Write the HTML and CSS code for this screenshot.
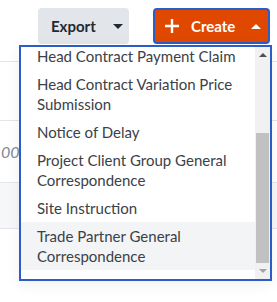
FILE: index.html
```html
<!DOCTYPE html>
<html lang="en">
<head>
    <meta charset="UTF-8">
    <meta name="viewport" content="width=device-width, initial-scale=1.0">
    <title>Create menu</title>
    <link rel="stylesheet" href="styles.css">
</head>
<body>
    <div class="toolbar">
        <button class="btn btn-export">Export <span class="caret-down"></span></button>
        <button class="btn btn-create">
            <svg class="plus" width="14" height="14" viewBox="0 0 14 14"><path d="M7 0v14M0 7h14" stroke="#fff" stroke-width="2.4"/></svg>
            Create <span class="caret-up"></span>
        </button>
    </div>

    <div class="table">
        <div class="row row-a"></div>
        <div class="row row-b"><span class="amount">00</span></div>
        <div class="row row-c"></div>
    </div>

    <div class="menu">
        <ul class="menu-list">
            <li>Head Contract Payment Claim</li>
            <li>Head Contract Variation Price Submission</li>
            <li>Notice of Delay</li>
            <li>Project Client Group General Correspondence</li>
            <li>Site Instruction</li>
            <li class="active">Trade Partner General Correspondence</li>
        </ul>
        <div class="scrollbar">
            <span class="sb-up"></span>
            <div class="sb-track"><div class="sb-thumb"></div></div>
            <span class="sb-down"></span>
        </div>
    </div>
</body>
</html>
```

FILE: styles.css
```css
body {
    margin: 0;
    background: #fff;
    font-family: Lato, "Open Sans", sans-serif;
    position: relative;
    height: 302px;
    overflow: hidden;
}

.toolbar {
    display: flex;
    justify-content: flex-end;
    gap: 24px;
    padding: 8px 7px 0 0;
}
.btn {
    height: 36px;
    border-radius: 4px;
    font-family: Lato, sans-serif;
    font-size: 15px;
    font-weight: 700;
    display: flex;
    align-items: center;
    cursor: pointer;
}
.btn-export {
    width: 91px;
    background: #e2e5e9;
    border: none;
    color: #1f2a33;
    padding: 0 0 0 13px;
    gap: 17px;
}
.btn-create {
    width: 117px;
    background: #e04800;
    border: 2px solid #2b5cc7;
    color: #fff;
    padding: 0 0 0 10px;
}
.plus { margin-right: 12px; }
.caret-down, .caret-up {
    width: 0;
    height: 0;
    border-left: 5px solid transparent;
    border-right: 5px solid transparent;
}
.caret-down { border-top: 5px solid #1f2a33; }
.caret-up { border-bottom: 5px solid #fff; margin-left: 16px; }

.table {
    margin-top: 17px;
    border-top: 1px solid #e3e5e8;
}
.row { border-bottom: 1px solid #e3e5e8; }
.row-a { height: 58px; }
.row-b { height: 61px; display: flex; align-items: center; }
.row-c { height: 45px; background: #f6f7f8; }
.amount {
    font-style: italic;
    color: #7b8b99;
    font-size: 16px;
    margin-left: 1px;
}

.menu {
    position: absolute;
    left: 19px;
    top: 45px;
    width: 249px;
    height: 232px;
    border: 2px solid #2b5cc7;
    background: #fff;
    display: flex;
    box-shadow: 0 4px 14px rgba(0, 0, 0, 0.06);
}
.menu-list {
    flex: 1;
    list-style: none;
    margin: -5px 0 0;
    padding: 0;
    overflow: hidden;
    font-size: 15px;
    line-height: 20px;
    color: #3b4148;
}
.menu-list li { padding: 4px 8px 4px 16px; }
.menu-list li.active { background: #f3f4f5; }

.scrollbar {
    width: 15px;
    background: #f1f1f1;
    display: flex;
    flex-direction: column;
    align-items: center;
}
.sb-up, .sb-down {
    width: 0;
    height: 0;
    border-left: 4px solid transparent;
    border-right: 4px solid transparent;
    margin: 6px 0;
}
.sb-up { border-bottom: 4px solid #505050; }
.sb-down { border-top: 4px solid #a3a3a3; }
.sb-track {
    flex: 1;
    width: 100%;
    display: flex;
    flex-direction: column;
    justify-content: flex-end;
    padding: 0 1px;
    box-sizing: border-box;
}
.sb-thumb {
    height: 130px;
    background: #c1c1c1;
}
```
